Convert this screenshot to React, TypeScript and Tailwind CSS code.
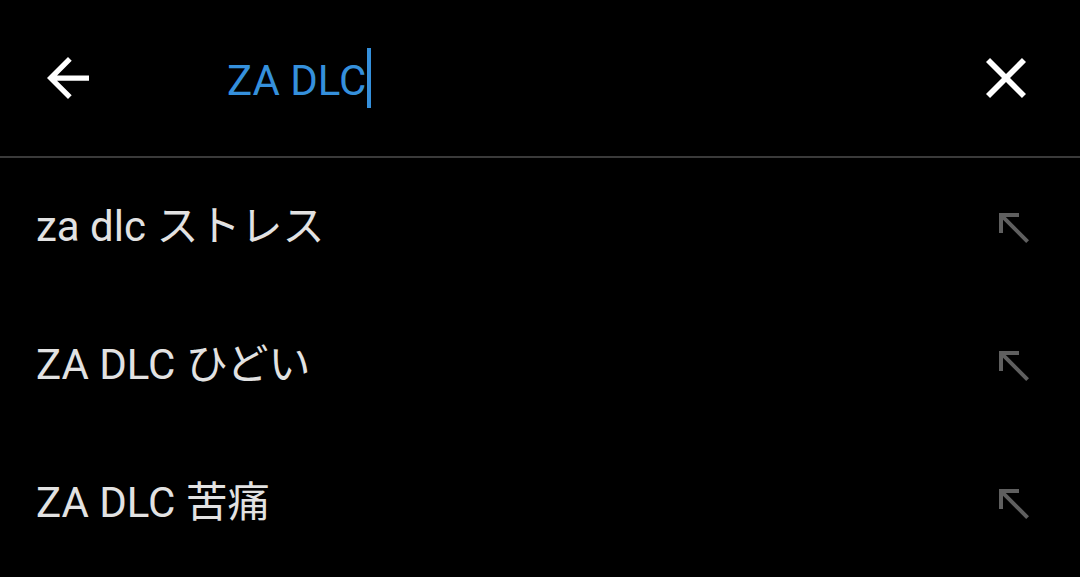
import React from "react";

const font = { fontFamily: '"Roboto", "Noto Sans CJK JP", sans-serif' };

function NorthWest() {
  return (
    <svg width="48" height="48" viewBox="0 0 24 24" fill="#5f5f5f">
      <path d="M5 15h2V8.41L18.59 20 20 18.59 8.41 7H15V5H5z" />
    </svg>
  );
}

const items = ["za dlc ストレス", "ZA DLC ひどい", "ZA DLC 苦痛"];

export default function App() {
  return (
    <div className="w-[1080px] h-[577px] bg-black overflow-hidden" style={font}>
      <div className="h-[158px] border-b-2 border-[#3a3a3a] flex items-center">
        <div className="ml-[47px] w-[42px] h-[42px] flex items-center justify-center">
          <svg width="42" height="42" viewBox="4 4 16 16" fill="#ffffff">
            <path d="M20 11H7.83l5.59-5.59L12 4l-8 8 8 8 1.41-1.41L7.83 13H20v-2z" />
          </svg>
        </div>
        <div className="ml-[138px] flex items-center flex-1">
          <span className="text-[42px] leading-none text-[#3590dc] mt-[6px]">ZA DLC</span>
          <div className="w-[4px] h-[60px] bg-[#3590dc] ml-[1px]" />
        </div>
        <div className="mr-[54px] w-[40px] h-[40px] flex items-center justify-center">
          <svg width="40" height="40" viewBox="5 5 14 14" fill="#ffffff">
            <path d="M19 6.41L17.59 5 12 10.59 6.41 5 5 6.41 10.59 12 5 17.59 6.41 19 12 13.41 17.59 19 19 17.59 13.41 12z" />
          </svg>
        </div>
      </div>
      <div className="flex flex-col">
        {items.map((t) => (
          <div key={t} className="h-[138px] flex items-center justify-between pl-[36px] pr-[43px]">
            <span className="text-[42px] leading-none text-[#e2e2e2]">{t}</span>
            <NorthWest />
          </div>
        ))}
      </div>
    </div>
  );
}
